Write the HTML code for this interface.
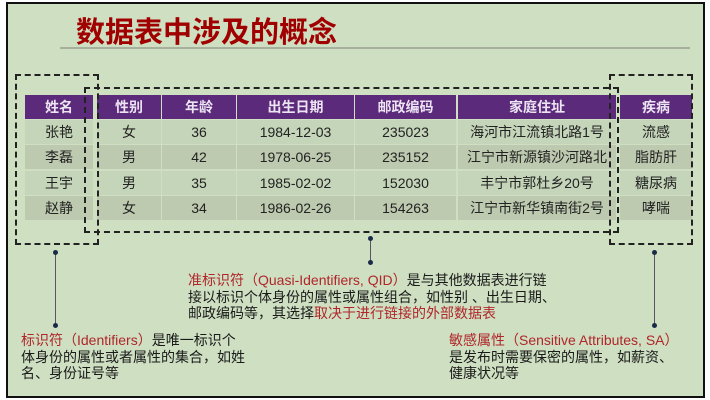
<!DOCTYPE html>
<html><head><meta charset="utf-8"><style>
*{margin:0;padding:0;box-sizing:border-box}
body{width:710px;height:400px;background:#fff;position:relative;overflow:hidden;font-family:"Liberation Sans","Noto Sans CJK SC",sans-serif}
.frame{position:absolute;left:6px;top:2px;width:699px;height:396px;border:2px solid #111;background:#cedfc2}
.title{position:absolute;left:76px;top:9px;font-size:29px;font-weight:bold;color:#a00000}
.rule{position:absolute;left:60px;top:47px;width:630px;height:2px;background:#a6b09c}
.c{position:absolute;text-align:center;font-size:14px;color:#222;line-height:25px}
.h{background:#5b2a7a;color:#ece4f2;font-weight:bold;height:24px;line-height:24px}
.r1{background:#c5d5b9}.r2{background:#bdcaaf}
.dash{position:absolute;border:2px dashed #222}
.ln{position:absolute;width:1px;background:#556}
.dot{position:absolute;width:5px;height:5px;border-radius:50%;background:#1c2a4a}
.t{position:absolute;font-size:14px;line-height:16.5px;color:#1a1a1a}
.red{color:#b0262a}
</style></head><body>
<div class="frame"></div>
<div class="title">数据表中涉及的概念</div>
<div class="rule"></div>
<div id="tbl"></div>
<div class="dash" style="left:15px;top:74px;width:84px;height:171px"></div>
<div class="dash" style="left:84px;top:87px;width:535px;height:146px"></div>
<div class="dash" style="left:609px;top:74px;width:84px;height:171px"></div>
<div class="ln" style="left:55px;top:252px;height:73px"></div>
<div class="dot" style="left:53px;top:250px"></div><div class="dot" style="left:53px;top:323px"></div>
<div class="ln" style="left:370px;top:238px;height:24px"></div>
<div class="dot" style="left:368px;top:236px"></div><div class="dot" style="left:368px;top:260px"></div>
<div class="ln" style="left:654px;top:252px;height:73px"></div>
<div class="dot" style="left:652px;top:250px"></div><div class="dot" style="left:652px;top:323px"></div>
<div class="t" style="left:188px;top:272px;width:420px"><span class="red">准标识符（Quasi-Identifiers, QID）</span>是与其他数据表进行链<br>接以标识个体身份的属性或属性组合，如性别 、出生日期、<br>邮政编码等，其选择<span class="red">取决于进行链接的外部数据表</span></div>
<div class="t" style="left:21px;top:332px;width:250px"><span class="red">标识符（Identifiers）</span>是唯一标识个<br>体身份的属性或者属性的集合，如姓<br>名、身份证号等</div>
<div class="t" style="left:449px;top:332px;width:260px"><span class="red">敏感属性（Sensitive Attributes, SA）</span><br>是发布时需要保密的属性，如薪资、<br>健康状况等</div>
<script>
var cols=[[25,93],[97,161],[162,236],[237,354],[355,456],[458,616],[620,692]];
var data=[["姓名","性别","年龄","出生日期","邮政编码","家庭住址","疾病"],
["张艳","女","36","1984-12-03","235023","海河市江流镇北路1号","流感"],
["李磊","男","42","1978-06-25","235152","江宁市新源镇沙河路北","脂肪肝"],
["王宇","男","35","1985-02-02","152030","丰宁市郭杜乡20号","糖尿病"],
["赵静","女","34","1986-02-26","154263","江宁市新华镇南街2号","哮喘"]];
var tops=[95,120,145,171,196],h="";
for(var r=0;r<5;r++)for(var c=0;c<7;c++){
var cl=r==0?"h":(r%2?"r1":"r2");
h+='<div class="c '+cl+'" style="left:'+cols[c][0]+'px;top:'+tops[r]+'px;width:'+(cols[c][1]-cols[c][0])+'px;height:24px;white-space:nowrap">'+data[r][c]+'</div>';}
document.getElementById("tbl").innerHTML=h;
</script>
</body></html>
